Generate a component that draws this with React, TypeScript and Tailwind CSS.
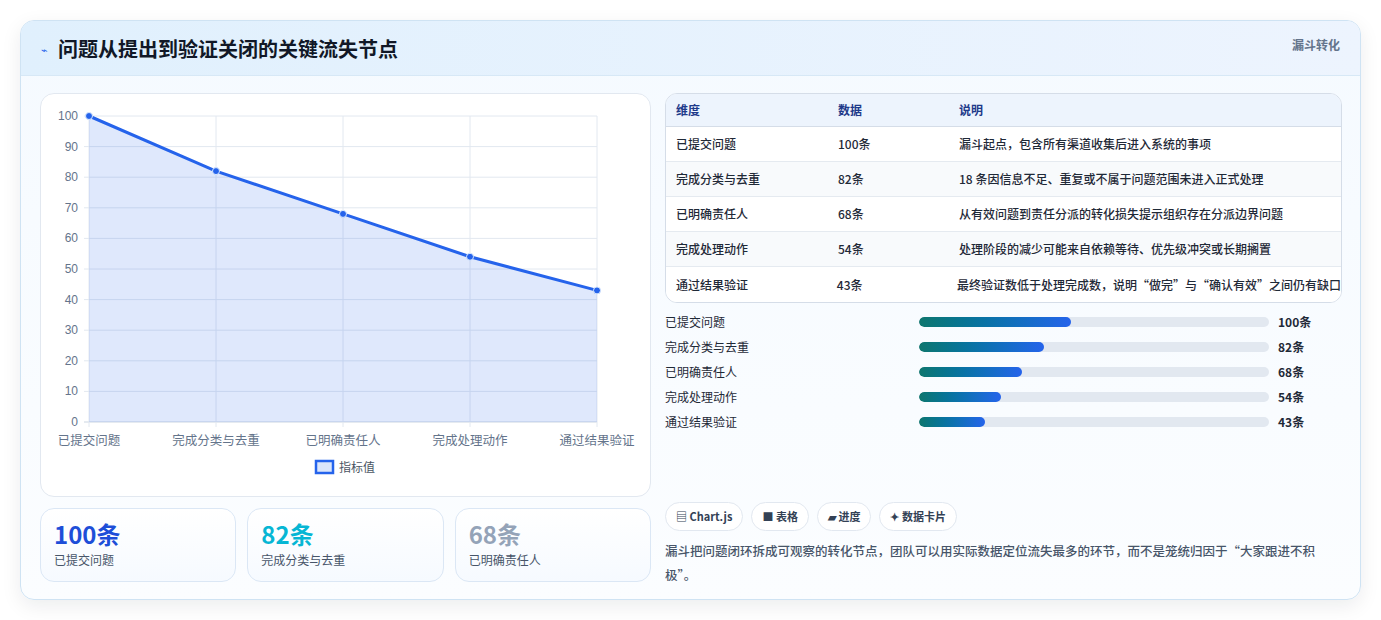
import React from "react";

const labels = ["已提交问题", "完成分类与去重", "已明确责任人", "完成处理动作", "通过结果验证"];
const vals = [100, 82, 68, 54, 43];
const fills = [152, 125, 103, 82, 66];
const rows = [
  ["已提交问题", "100条", "漏斗起点，包含所有渠道收集后进入系统的事项"],
  ["完成分类与去重", "82条", "18 条因信息不足、重复或不属于问题范围未进入正式处理"],
  ["已明确责任人", "68条", "从有效问题到责任分派的转化损失提示组织存在分派边界问题"],
  ["完成处理动作", "54条", "处理阶段的减少可能来自依赖等待、优先级冲突或长期搁置"],
  ["通过结果验证", "43条", "最终验证数低于处理完成数，说明“做完”与“确认有效”之间仍有缺口"],
];

function Chart() {
  const x0 = 48, x1 = 556, yTop = 22, yBot = 328;
  const xs = labels.map((_, i) => x0 + ((x1 - x0) / 4) * i);
  const y = (v: number) => yBot - ((yBot - yTop) * v) / 100;
  const pts = vals.map((v, i) => `${xs[i]},${y(v)}`).join(" ");
  return (
    <svg width="610" height="402" className="block">
      {Array.from({ length: 11 }).map((_, i) => {
        const v = i * 10;
        return (
          <g key={i}>
            <line x1={x0 - 5} x2={x1} y1={y(v)} y2={y(v)} stroke={i === 0 ? "#cbd5e1" : "#e2e8f0"} />
            <text x={x0 - 11} y={y(v) + 4} textAnchor="end" fontSize="12" fill="#64748b" fontFamily="Liberation Sans, sans-serif">{v}</text>
          </g>
        );
      })}
      {xs.map((x, i) => (
        <g key={i}>
          <line x1={x} x2={x} y1={yTop} y2={yBot + 5} stroke="#e2e8f0" />
          <text x={x} y={yBot + 23} textAnchor="middle" fontSize="12.5" fill="#64748b" fontFamily="Noto Sans CJK SC, sans-serif">{labels[i]}</text>
        </g>
      ))}
      <polygon points={`${x0},${yBot} ${pts} ${x1},${yBot}`} fill="rgba(37,99,235,0.15)" />
      <polyline points={pts} fill="none" stroke="#2563eb" strokeWidth="3" />
      {vals.map((v, i) => (
        <circle key={i} cx={xs[i]} cy={y(v)} r="3.5" fill="#2563eb" stroke="#dbeafe" strokeWidth="1" />
      ))}
      <rect x="275" y="367" width="17" height="12" fill="#dbe6fb" stroke="#2563eb" strokeWidth="2.5" />
      <text x="298" y="378" fontSize="12" fill="#4b5563" fontFamily="Noto Sans CJK SC, sans-serif">指标值</text>
    </svg>
  );
}

export default function App() {
  const font = { fontFamily: '"Noto Sans CJK SC", "Noto Sans", sans-serif' };
  return (
    <div className="w-[1381px] h-[620px] bg-white pt-[20px] px-[20px]" style={font}>
      <div className="w-[1341px] h-[580px] rounded-[14px] border border-[#cfe3f3] bg-gradient-to-b from-[#f5faff] to-[#fbfdff] shadow-[0_6px_20px_rgba(15,23,42,0.08)] overflow-hidden">
        <div className="h-[55px] bg-gradient-to-r from-[#e0f0fd] to-[#edf4fe] border-b border-[#d7e8f6] flex items-start justify-between px-[20px]">
          <div className="flex items-center gap-[10px] mt-[13px]">
            <span className="text-[#2563eb] text-[11px]">⌁</span>
            <span className="text-[20px] font-bold text-[#111827]">问题从提出到验证关闭的关键流失节点</span>
          </div>
          <span className="text-[12px] font-bold text-[#64748b] mt-[15px]">漏斗转化</span>
        </div>
        <div className="flex gap-[14px] px-[19px] pt-[17px]">
          <div className="w-[611px] flex flex-col gap-[11px]">
            <div className="h-[404px] rounded-[14px] border border-[#e2e8f0] bg-white">
              <Chart />
            </div>
            <div className="grid grid-cols-3 gap-[11px]">
              {[["100条", "text-[#1d4ed8]", "已提交问题"], ["82条", "text-[#06b6d4]", "完成分类与去重"], ["68条", "text-[#94a3b8]", "已明确责任人"]].map(([v, c, l]) => (
                <div key={l} className="h-[74px] rounded-[14px] border border-[#dbe7f5] bg-gradient-to-b from-white to-[#f6faff] px-[13px] pt-[10px]">
                  <div className={`text-[24px] leading-[30px] font-bold ${c}`}>{v}</div>
                  <div className="text-[12px] text-[#475569] mt-[2px]">{l}</div>
                </div>
              ))}
            </div>
          </div>
          <div className="w-[677px] flex flex-col">
            <div className="rounded-[12px] border border-[#d5dde8] overflow-hidden bg-white">
              <div className="h-[33px] flex items-center bg-[#edf4fd] border-b border-[#d5dde8] text-[12px] font-bold text-[#1e3a8a]">
                <span className="w-[172px] pl-[10px]">维度</span>
                <span className="w-[121px]">数据</span>
                <span>说明</span>
              </div>
              {rows.map((r, i) => (
                <div key={i} className={`h-[35px] flex items-center text-[12px] font-medium text-[#1f2937] ${i < 4 ? "border-b border-[#e5eaf0]" : ""} ${i % 2 ? "bg-[#f8fafc]" : "bg-white"}`}>
                  <span className="w-[172px] pl-[10px]">{r[0]}</span>
                  <span className="w-[121px]">{r[1]}</span>
                  <span className="whitespace-nowrap">{r[2]}</span>
                </div>
              ))}
            </div>
            <div className="flex flex-col gap-[9px] mt-[11px]">
              {labels.map((l, i) => (
                <div key={l} className="h-[16px] flex items-center text-[12px]">
                  <span className="w-[254px] text-[#1f2937]">{l}</span>
                  <div className="w-[350px] h-[10px] rounded-full bg-[#e2e8f0] overflow-hidden">
                    <div className="h-full rounded-full bg-gradient-to-r from-[#0f766e] to-[#2563eb]" style={{ width: fills[i] }} />
                  </div>
                  <span className="ml-[9px] font-bold text-[#1f2937]">{vals[i]}条</span>
                </div>
              ))}
            </div>
            <div className="flex gap-[8px] mt-[72px]">
              {["▤ Chart.js", "■ 表格", "▰ 进度", "✦ 数据卡片"].map((c) => (
                <span key={c} className="h-[29px] px-[10px] rounded-full border border-[#e2e8f0] bg-white text-[11px] font-bold text-[#334155] flex items-center">{c}</span>
              ))}
            </div>
            <p className="mt-[8px] text-[12.5px] leading-[24px] font-medium text-[#475569]">漏斗把问题闭环拆成可观察的转化节点，团队可以用实际数据定位流失最多的环节，而不是笼统归因于“大家跟进不积极”。</p>
          </div>
        </div>
      </div>
    </div>
  );
}
